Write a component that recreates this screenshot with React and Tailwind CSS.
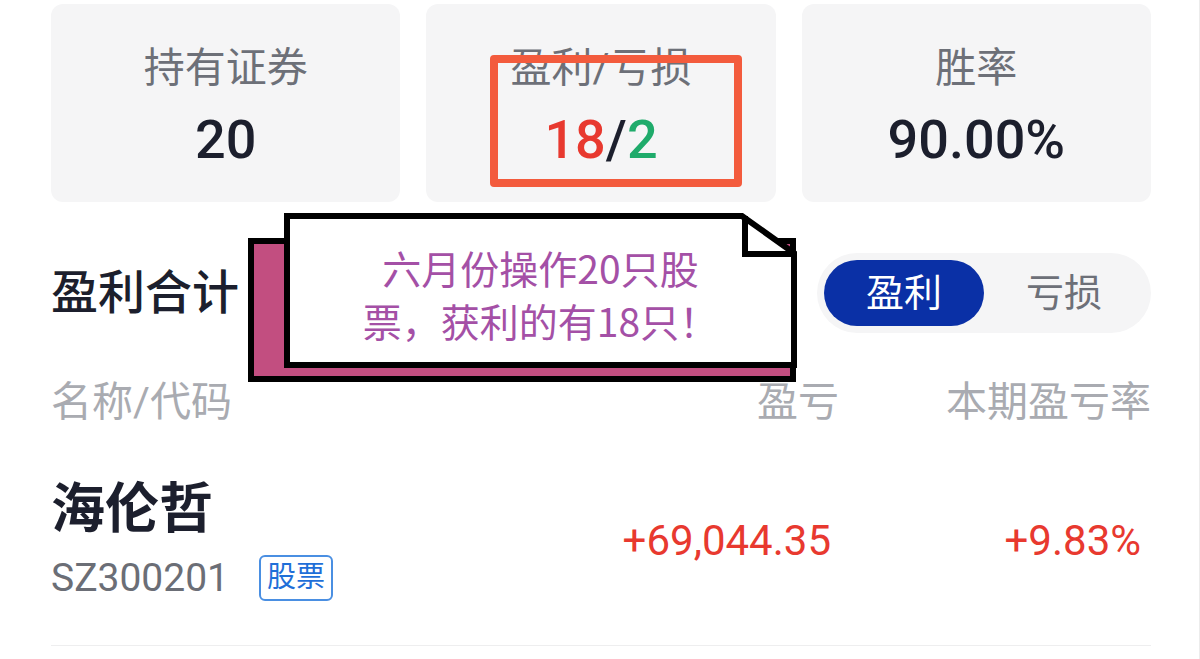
export default function App() {
  const stats = [
    { label: '持有证券', value: <span>20</span> },
    {
      label: '盈利/亏损',
      value: (
        <span>
          <span className="text-[#e8392f]">18</span>
          <span>/</span>
          <span className="text-[#1fab6b]">2</span>
        </span>
      ),
    },
    { label: '胜率', value: <span>90.00%</span> },
  ]

  return (
    <div className="relative w-[1200px] h-[659px] overflow-hidden bg-white border-r border-[#ececec] font-['Roboto','Noto_Sans_CJK_SC',sans-serif]">
      <div className="pl-[51px] pr-[48px] pt-[4px]">
        {/* Summary cards */}
        <div className="grid grid-cols-3 gap-[26px]">
          {stats.map((s) => (
            <div key={s.label} className="h-[198px] rounded-[12px] bg-[#f5f5f6] flex flex-col items-center pt-[40px]">
              <div className="text-[41px] leading-[48px] text-[#6d7078]">{s.label}</div>
              <div className="mt-[18px] text-[54px] leading-[60px] font-medium text-[#1c1f2d]">{s.value}</div>
            </div>
          ))}
        </div>

        {/* Section title + toggle */}
        <div className="mt-[51px] h-[80px] flex items-center justify-between">
          <div className="text-[47px] leading-[52px] font-medium text-[#1c1f2d]">盈利合计</div>
          <div className="flex items-center h-[80px] p-[7px] rounded-full bg-[#f5f5f6]">
            <div className="w-[160px] h-[66px] rounded-full bg-[#0a30a6] text-white text-[38px] flex items-center justify-center">
              盈利
            </div>
            <div className="w-[160px] h-[66px] rounded-full text-[#6d7078] text-[38px] flex items-center justify-center">
              亏损
            </div>
          </div>
        </div>

        {/* Table header */}
        <div className="mt-[49px] grid grid-cols-[1fr_300px_312px] text-[41px] leading-[40px] text-[#a9abb1]">
          <div>名称/代码</div>
          <div className="text-right">盈亏</div>
          <div className="text-right">本期盈亏率</div>
        </div>

        {/* Row */}
        <div className="mt-[58px] pb-[44px] grid grid-cols-[1fr_300px_312px] items-center">
          <div>
            <div className="text-[54px] leading-[60px] font-bold text-[#1c1f2d]">海伦哲</div>
            <div className="mt-[15px] flex items-center gap-[30px]">
              <span className="text-[39px] leading-[46px] text-[#6b6e76]">SZ300201</span>
              <span className="h-[46px] px-[6px] flex items-center rounded-[6px] border-2 border-[#4a8fe2] text-[29px] text-[#1f6fd8]">
                股票
              </span>
            </div>
          </div>
          <div className="text-right pr-[8px] text-[42px] text-[#e8392f]">+69,044.35</div>
          <div className="text-right pr-[10px] text-[42px] text-[#e8392f]">+9.83%</div>
        </div>
        <div className="h-px bg-[#eeeeef]" />
      </div>

      {/* Red highlight annotation */}
      <div className="absolute left-[490px] top-[55px] w-[252px] h-[132px] border-[8px] border-[#f35b3d] rounded-[4px]" />

      {/* Callout note */}
      <div className="absolute left-[248px] top-[238px] w-[548px] h-[144px] border-[6px] border-black bg-[#c24e80]" />
      <div className="absolute left-[284px] top-[213px] w-[513px] h-[155px]">
        <svg width="513" height="155" viewBox="0 0 513 155" className="absolute inset-0">
          <path d="M3 3 H458 L510 40 V152 H3 Z" fill="white" stroke="black" strokeWidth="6" strokeLinejoin="miter" />
          <path d="M461 3 V41 H510" fill="none" stroke="black" strokeWidth="6" />
        </svg>
        <div className="absolute left-[6px] right-[6px] top-[28px] text-center text-[39px] leading-[53px] text-[#a450a6] font-['Noto_Sans_CJK_SC',sans-serif]">
          六月份操作20只股
          <br />
          票，获利的有18只！
        </div>
      </div>
    </div>
  )
}
